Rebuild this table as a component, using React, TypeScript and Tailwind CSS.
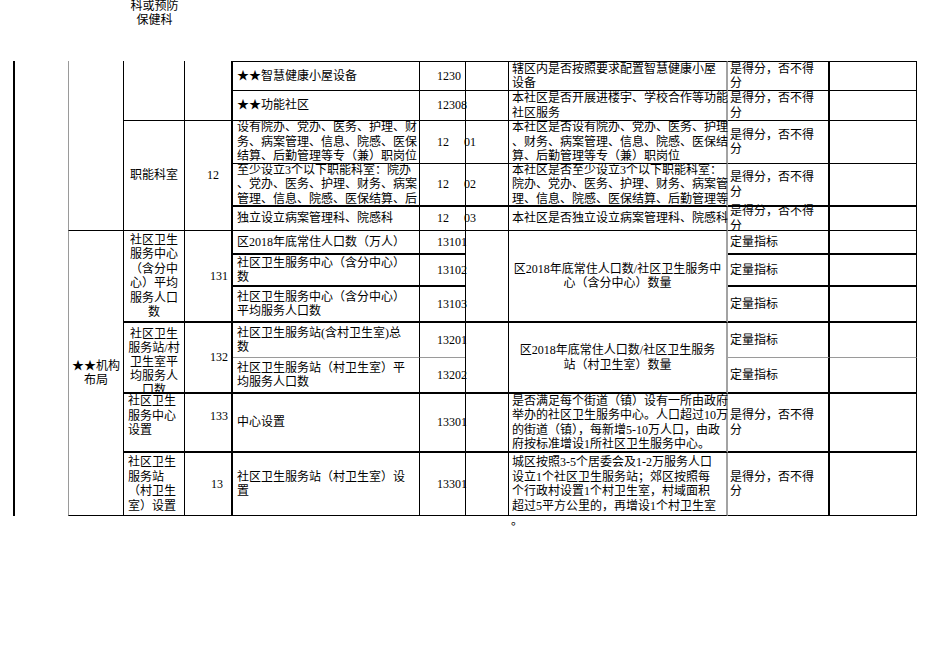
const ROW_START = [
  'row-start-1', 'row-start-2', 'row-start-3', 'row-start-4', 'row-start-5', 'row-start-6',
  'row-start-7', 'row-start-8', 'row-start-9', 'row-start-10', 'row-start-11', 'row-start-12',
];

// bottom rule of each sheet row
const ROW_BOTTOM = [
  'border-b', 'border-b', 'border-b', 'border-b-2', 'border-b', 'border-b-2',
  'border-b-2', 'border-b-2', 'border-b border-b-[#9a9a9a]', 'border-b-2', 'border-b-2', 'border-b',
];

const SCORE = ['是得分，否不得', '分'];
const QUANT = ['定量指标'];

type Row = { e: string[]; f: string; h?: string[]; i: string[] };

const rows: Row[] = [
  { e: ['★★智慧健康小屋设备'], f: '1230', h: ['辖区内是否按照要求配置智慧健康小屋', '设备'], i: SCORE },
  { e: ['★★功能社区'], f: '12308', h: ['本社区是否开展进楼宇、学校合作等功能', '社区服务'], i: SCORE },
  {
    e: ['设有院办、党办、医务、护理、财', '务、病案管理、信息、院感、医保', '结算、后勤管理等专（兼）职岗位'],
    f: '12     01',
    h: ['本社区是否设有院办、党办、医务、护理', '、财务、病案管理、信息、院感、医保结', '算、后勤管理等专（兼）职岗位'],
    i: SCORE,
  },
  {
    e: ['至少设立3个以下职能科室：院办', '、党办、医务、护理、财务、病案', '管理、信息、院感、医保结算、后'],
    f: '12     02',
    h: ['本社区是否至少设立3个以下职能科室：', '院办、党办、医务、护理、财务、病案管', '理、信息、院感、医保结算、后勤管理等'],
    i: SCORE,
  },
  { e: ['独立设立病案管理科、院感科'], f: '12     03', h: ['本社区是否独立设立病案管理科、院感科'], i: SCORE },
  { e: ['区2018年底常住人口数（万人）'], f: '13101', i: QUANT },
  { e: ['社区卫生服务中心（含分中心）', '数'], f: '13102', i: QUANT },
  { e: ['社区卫生服务中心（含分中心）', '平均服务人口数'], f: '13103', i: QUANT },
  { e: ['社区卫生服务站(含村卫生室)总', '数'], f: '13201', i: QUANT },
  { e: ['社区卫生服务站（村卫生室）平', '均服务人口数'], f: '13202', i: QUANT },
  {
    e: ['中心设置'],
    f: '13301',
    h: ['是否满足每个街道（镇）设有一所由政府', '举办的社区卫生服务中心。人口超过10万', '的街道（镇），每新增5-10万人口，由政', '府按标准增设1所社区卫生服务中心。'],
    i: SCORE,
  },
  {
    e: ['社区卫生服务站（村卫生室）设', '置'],
    f: '13301',
    h: ['城区按照3-5个居委会及1-2万服务人口', '设立1个社区卫生服务站；郊区按照每', '个行政村设置1个村卫生室，村域面积', '超过5平方公里的，再增设1个村卫生室'],
    i: SCORE,
  },
];

function Lines({ lines }: { lines: string[] }) {
  return (
    <div>
      {lines.map((l, k) => (
        <div key={k} className="whitespace-nowrap">
          {l}
        </div>
      ))}
    </div>
  );
}

export default function App() {
  return (
    <div className="w-[950px] h-[672px] bg-white text-black overflow-hidden font-['Liberation_Serif','Noto_Sans_CJK_SC',serif] text-[12px] leading-[14.5px]">
      {/* text spilling down from the row above */}
      <div className="h-[61px] flex pl-[124px]">
        <div className="w-[61px] text-center leading-[13.5px]">
          科或预防
          <br />
          保健科
        </div>
      </div>

      <div className="ml-[13px] grid grid-cols-[55px_56px_61px_48px_187px_45px_44px_219px_102px_87px] grid-rows-[30px_30px_43px_43px_24px_24px_32px_36px_35px_36px_59px_63px]">
        <div className="col-start-1 row-start-1 row-span-12 border-l-2 border-black" />

        {/* category column */}
        <div className="col-start-2 row-start-1 row-span-5 border-l border-l-[#9a9a9a] border-r border-b border-black" />
        <div className="col-start-2 row-start-6 row-span-7 border-l border-l-[#9a9a9a] border-r border-b border-black flex items-center justify-center text-center">
          <Lines lines={['★★机构', '布局']} />
        </div>

        {/* sub item */}
        <div className="col-start-3 row-start-1 row-span-2 border-r border-b border-black" />
        <div className="col-start-3 row-start-3 row-span-3 border-r border-b border-black flex items-center justify-center">
          职能科室
        </div>
        <div className="col-start-3 row-start-6 row-span-3 border-r border-b-2 border-black flex items-center justify-center text-center">
          <Lines lines={['社区卫生', '服务中心', '（含分中', '心）平均', '服务人口', '数']} />
        </div>
        <div className="col-start-3 row-start-9 row-span-2 border-r border-b-2 border-black text-center leading-[14px] pt-[4px] overflow-hidden">
          <Lines lines={['社区卫生', '服务站/村', '卫生室平', '均服务人', '口数']} />
        </div>
        <div className="col-start-3 row-start-11 border-r border-b-2 border-black pl-[4px]">
          <Lines lines={['社区卫生', '服务中心', '设置']} />
        </div>
        <div className="col-start-3 row-start-12 border-r border-b border-black flex items-center pl-[4px]">
          <Lines lines={['社区卫生', '服务站', '（村卫生', '室）设置']} />
        </div>

        {/* sub code */}
        <div className="col-start-4 row-start-1 row-span-2 border-r-2 border-b border-black" />
        <div className="col-start-4 row-start-3 row-span-3 border-r-2 border-b border-black flex items-center justify-end pr-[12px]">
          12
        </div>
        <div className="col-start-4 row-start-6 row-span-3 border-r-2 border-b-2 border-black flex items-center justify-end pr-[3px]">
          131
        </div>
        <div className="col-start-4 row-start-9 row-span-2 border-r-2 border-b-2 border-black flex items-center justify-end pr-[3px]">
          132
        </div>
        <div className="col-start-4 row-start-11 border-r-2 border-b-2 border-black flex justify-end pr-[3px] pt-[15px]">
          133
        </div>
        <div className="col-start-4 row-start-12 border-r-2 border-b border-black flex items-center justify-end pr-[8px]">
          13
        </div>

        {rows.map((r, n) => {
          const pos = `${ROW_START[n]} ${ROW_BOTTOM[n]} ${n === 0 ? 'border-t' : ''} border-black`;
          const merged = n >= 5 && n <= 9;
          return [
            <div key={`e${n}`} className={`col-start-5 ${pos} border-r flex items-center pl-[4px]`}>
              <Lines lines={r.e} />
            </div>,
            <div key={`f${n}`} className={`col-start-6 ${pos} flex items-center pl-[17px] whitespace-pre`}>
              {r.f}
            </div>,
            !merged && <div key={`g${n}`} className={`col-start-7 ${pos} border-l border-r relative`} />,
            !merged && (
              <div key={`h${n}`} className={`col-start-8 ${pos} border-r-2 border-r-[#a3a3a3] flex items-center pl-[3px]`}>
                <Lines lines={r.h ?? []} />
              </div>
            ),
            <div key={`i${n}`} className={`col-start-9 ${pos} border-r-2 flex items-center pl-[2px]`}>
              <Lines lines={r.i} />
            </div>,
            <div key={`j${n}`} className={`col-start-10 ${pos} border-r`} />,
          ];
        })}

        {/* merged formula cells */}
        <div className="col-start-7 row-start-6 row-span-3 border-l border-r border-b-2 border-black relative" />
        <div className="col-start-8 row-start-6 row-span-3 border-r-2 border-r-[#a3a3a3] border-b-2 border-b-black flex items-center justify-center text-center">
          <Lines lines={['区2018年底常住人口数/社区卫生服务中', '心（含分中心）数量']} />
        </div>
        <div className="col-start-7 row-start-9 row-span-2 border-l border-r border-b-2 border-black relative" />
        <div className="col-start-8 row-start-9 row-span-2 border-r-2 border-r-[#a3a3a3] border-b-2 border-b-black flex items-center justify-center text-center">
          <Lines lines={['区2018年底常住人口数/社区卫生服务', '站（村卫生室）数量']} />
        </div>
      </div>

      <div className="ml-[509px] pl-[2px] -mt-[2px]">。</div>
    </div>
  );
}
